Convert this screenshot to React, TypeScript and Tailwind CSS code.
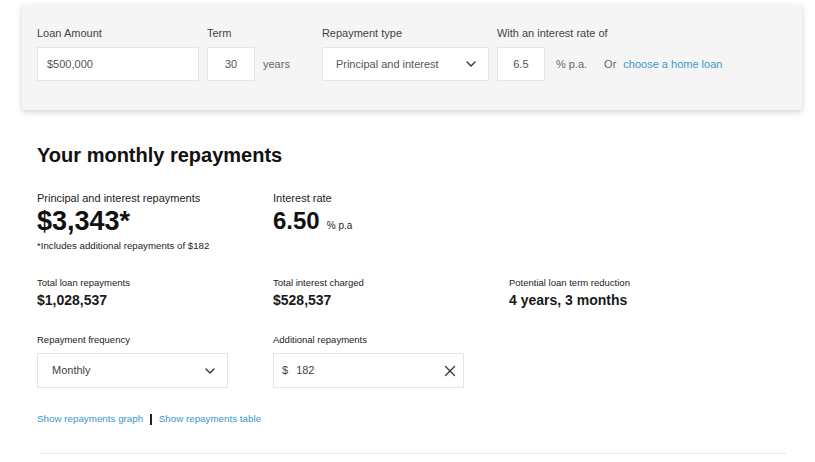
import { ChevronDown, X } from 'lucide-react';

const font = { fontFamily: '"Liberation Sans", Arial, sans-serif' };

function Label({ children }: { children: React.ReactNode }) {
  return <div className="text-[11px] leading-[14px] text-[#444] mb-[7px]">{children}</div>;
}

function Box({ className = '', children }: { className?: string; children?: React.ReactNode }) {
  return (
    <div className={`h-[34px] bg-white border border-[#e6e6e6] flex items-center text-[11px] text-[#555] ${className}`}>
      {children}
    </div>
  );
}

function Stat({ label, value }: { label: string; value: string }) {
  return (
    <div>
      <div className="text-[9.5px] leading-[12px] text-[#222]">{label}</div>
      <div className="mt-[2px] text-[14px] leading-[18px] font-bold text-[#1a1a1a]">{value}</div>
    </div>
  );
}

export default function App() {
  return (
    <div className="w-[815px] h-[462px] bg-white overflow-hidden" style={font}>
      {/* Calculator inputs */}
      <div className="ml-[22px] mt-[5px] w-[780px] h-[105px] bg-[#f5f5f5] shadow-[0_2px_6px_rgba(0,0,0,0.18)] pl-[15px] pt-[21px] flex items-start">
        <div>
          <Label>Loan Amount</Label>
          <Box className="w-[162px] pl-[9px]">$500,000</Box>
        </div>
        <div className="ml-[8px]">
          <Label>Term</Label>
          <div className="flex items-center">
            <Box className="w-[48px] justify-center">30</Box>
            <span className="ml-[8px] text-[11px] text-[#666]">years</span>
          </div>
        </div>
        <div className="ml-[32px]">
          <Label>Repayment type</Label>
          <Box className="w-[167px] pl-[13px] pr-[9px] justify-between">
            <span>Principal and interest</span>
            <ChevronDown size={16} strokeWidth={2} className="text-[#333]" />
          </Box>
        </div>
        <div className="ml-[8px]">
          <Label>With an interest rate of</Label>
          <div className="flex items-center">
            <Box className="w-[48px] justify-center">6.5</Box>
            <span className="ml-[11px] text-[11px] text-[#666]">% p.a.</span>
            <span className="ml-[17px] text-[11px] text-[#666]">Or</span>
            <a className="ml-[7px] text-[11px] text-[#3a97cf]">choose a home loan</a>
          </div>
        </div>
      </div>

      {/* Results */}
      <div className="px-[37px]">
        <h2 className="mt-[33px] text-[20px] leading-[24px] font-bold text-[#111]">Your monthly repayments</h2>

        <div className="grid grid-cols-[236px_236px_236px] mt-[24px]">
          <div>
            <div className="text-[11px] leading-[14px] text-[#222]">Principal and interest repayments</div>
            <div className="mt-[1px] text-[27px] leading-[30px] font-bold text-[#111]">$3,343*</div>
            <div className="mt-[4px] text-[9.7px] leading-[12px] text-[#222]">*Includes additional repayments of $182</div>
          </div>
          <div>
            <div className="text-[11px] leading-[14px] text-[#222]">Interest rate</div>
            <div className="mt-[1px] flex items-baseline">
              <span className="text-[24px] leading-[30px] font-bold text-[#111]">6.50</span>
              <span className="ml-[7px] text-[10px] text-[#222]">% p.a</span>
            </div>
          </div>
          <div />
        </div>

        <div className="grid grid-cols-[236px_236px_236px] mt-[25px]">
          <Stat label="Total loan repayments" value="$1,028,537" />
          <Stat label="Total interest charged" value="$528,537" />
          <Stat label="Potential loan term reduction" value="4 years, 3 months" />
        </div>

        <div className="grid grid-cols-[236px_236px] mt-[25px]">
          <div>
            <div className="text-[9.5px] leading-[12px] text-[#222] mb-[7px]">Repayment frequency</div>
            <div className="w-[191px] h-[35px] border border-[#e6e6e6] flex items-center justify-between pl-[14px] pr-[9px] text-[11px] text-[#444]">
              <span>Monthly</span>
              <ChevronDown size={16} strokeWidth={2} className="text-[#333]" />
            </div>
          </div>
          <div>
            <div className="text-[9.5px] leading-[12px] text-[#222] mb-[7px]">Additional repayments</div>
            <div className="w-[191px] h-[35px] border border-[#e6e6e6] flex items-center pl-[8px] pr-[4px] text-[11px] text-[#444]">
              <span>$</span>
              <span className="ml-[8px] flex-1">182</span>
              <X size={18} strokeWidth={1.6} className="text-[#333]" />
            </div>
          </div>
        </div>

        <div className="mt-[25px] flex items-center text-[9.8px] leading-[12px]">
          <a className="text-[#3a97cf]">Show repayments graph</a>
          <span className="mx-[7px] w-[1.5px] h-[11px] bg-[#222]" />
          <a className="text-[#3a97cf]">Show repayments table</a>
        </div>

        <div className="mt-[28px] ml-[3px] w-[746px] h-px bg-[#e8e8e8]" />
      </div>
    </div>
  );
}
